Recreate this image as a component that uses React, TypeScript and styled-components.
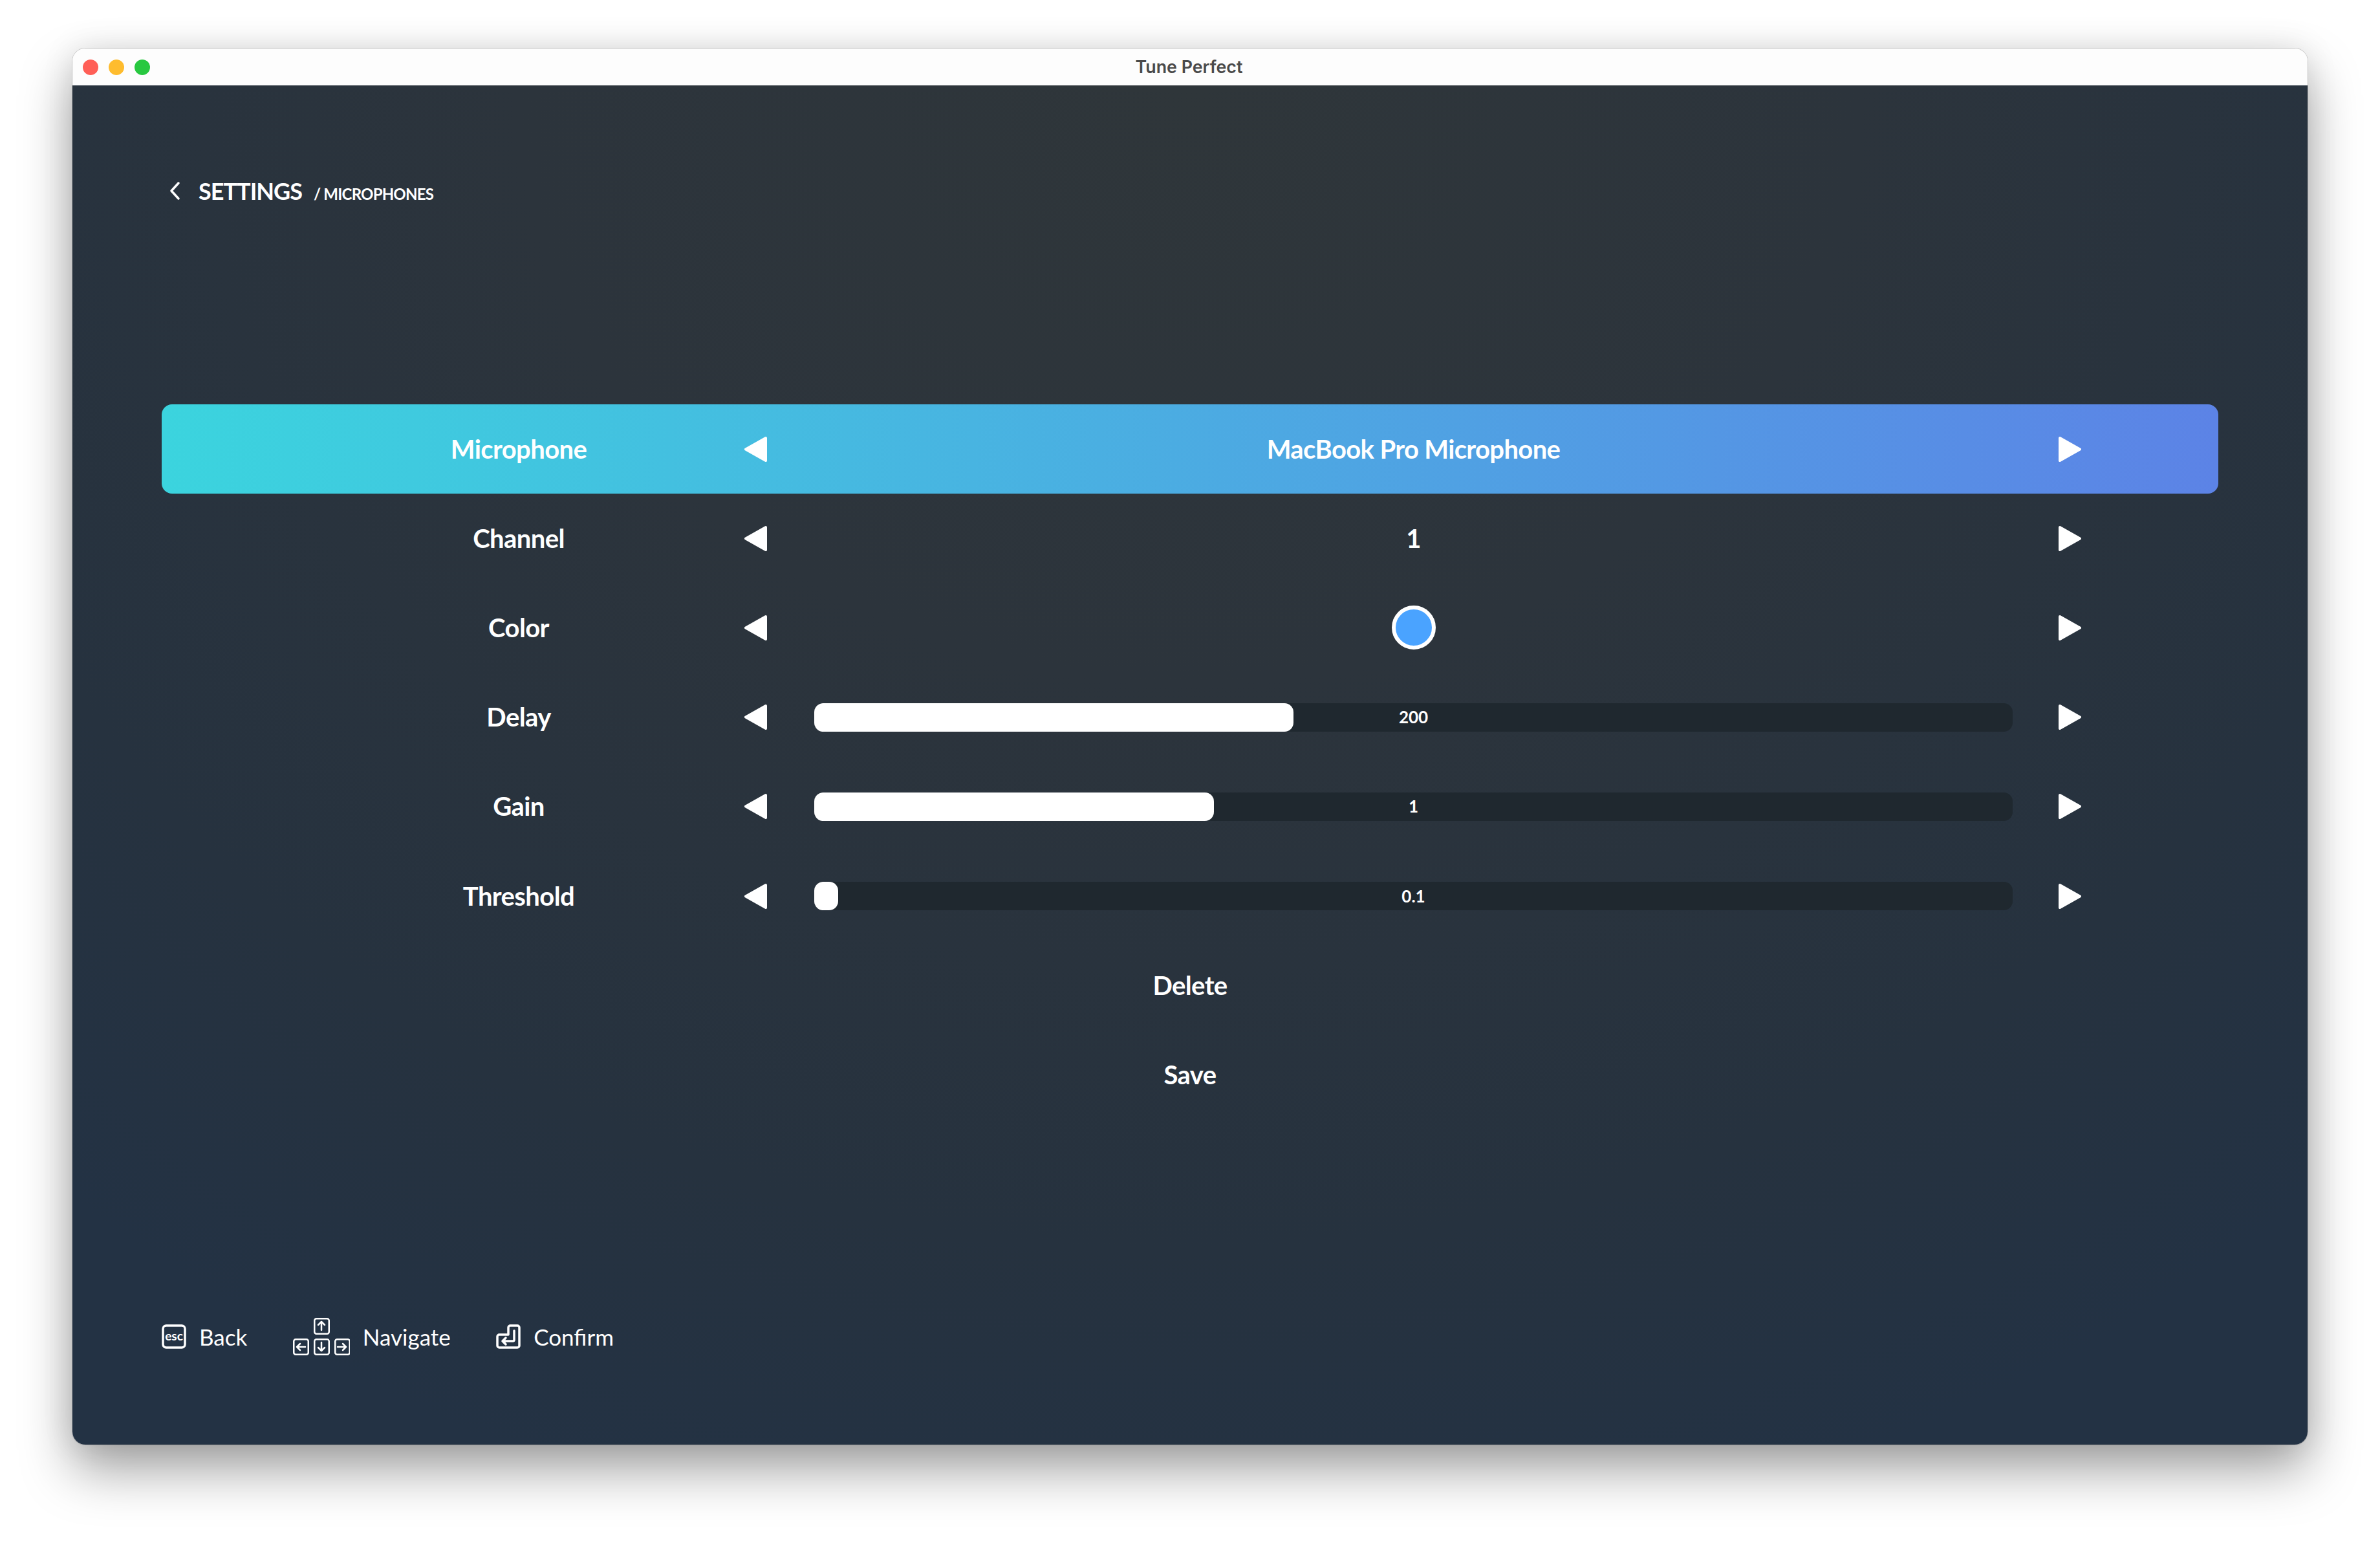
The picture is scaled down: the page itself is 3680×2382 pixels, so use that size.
import React from "react";
import styled, { createGlobalStyle } from "styled-components";

const Global = createGlobalStyle`
  html, body { margin: 0; padding: 0; background: #fff; }
  body { font-family: "Lato", "Liberation Sans", sans-serif; color: #fff; }
  #root { width: 3680px; height: 2382px; overflow: hidden; }
`;

const Stage = styled.div`
  width: 3680px;
  height: 2382px;
  padding: 75px 112px 149px;
  box-sizing: border-box;
  background: #fff;
`;

const Window = styled.div`
  height: 100%;
  display: flex;
  flex-direction: column;
  border-radius: 20px;
  overflow: hidden;
  box-shadow: 0 0 0 1px rgba(0, 0, 0, 0.16), 0 40px 80px rgba(0, 0, 0, 0.36), 0 0 50px rgba(0, 0, 0, 0.1);
`;

const TitleBar = styled.header`
  position: relative;
  flex: 0 0 57px;
  display: flex;
  align-items: center;
  justify-content: center;
  padding-right: 3px;
  background: #fdfdfd;
`;

const Lights = styled.div`
  position: absolute;
  left: 16px;
  top: 17px;
  display: flex;
  gap: 16px;
`;

const Light = styled.span<{ $color: string }>`
  width: 24px;
  height: 24px;
  border-radius: 50%;
  background: ${(p) => p.$color};
`;

const Title = styled.h1`
  margin: 0;
  font: 600 26.8px/1 "Inter", "Liberation Sans", sans-serif;
  color: #4a4a4a;
`;

const Main = styled.main`
  flex: 1;
  display: flex;
  flex-direction: column;
  padding: 0 138px 137px;
  background: radial-gradient(75% 110% at 50% 0%, #2f363a 0%, #2c343c 40%, #26323f 78%, #233244 100%);
`;

const Breadcrumb = styled.nav`
  display: flex;
  align-items: baseline;
  height: 60px;
  margin-top: 133px;
  line-height: 60px;
`;

const BackChevron = styled.svg`
  width: 20px;
  height: 30px;
  margin: 0 27px 0 10px;
  align-self: center;
  fill: none;
  stroke: #fff;
  stroke-width: 3.5;
  stroke-linecap: round;
  stroke-linejoin: round;
`;

const Crumb = styled.span`
  font-size: 36px;
  font-weight: 700;
  letter-spacing: -1px;
`;

const SubCrumb = styled.span`
  margin-left: 18px;
  font-size: 24px;
  font-weight: 700;
  letter-spacing: -0.8px;
`;

const Rows = styled.div`
  display: flex;
  flex-direction: column;
  margin-top: 300px;
`;

const Row = styled.div<{ $active?: boolean }>`
  display: grid;
  grid-template-columns: 689px 35px 73px 1853px 71px 35px;
  align-items: center;
  height: 138.2px;
  padding: 0 212px;
  border-radius: 16px;
  background: ${(p) => (p.$active ? "linear-gradient(90deg, #3bd4de 0%, #5c83e6 100%)" : "transparent")};
`;

const Label = styled.div`
  font-size: 40px;
  font-weight: 700;
  letter-spacing: -0.6px;
  text-align: center;
  padding: 0 9px 1px 0;
`;

const Arrow = styled.svg`
  display: block;
  width: 35px;
  height: 39px;
  fill: #fff;
  stroke: #fff;
  stroke-width: 4;
  stroke-linejoin: round;
`;

const Cell = styled.div`
  grid-column: 4;
  display: flex;
  justify-content: center;
  align-items: center;
`;

const ArrowCell = styled.div`
  grid-column: 6;
`;

const Value = styled.div`
  padding-bottom: 1px;
  font-size: 40px;
  font-weight: 700;
  letter-spacing: -0.65px;
`;

const Swatch = styled.div<{ $color: string }>`
  box-sizing: border-box;
  width: 68px;
  height: 68px;
  border-radius: 50%;
  border: 6px solid #fff;
  background: ${(p) => p.$color};
`;

const Track = styled.div`
  position: relative;
  width: 100%;
  height: 44px;
  border-radius: 14px;
  background: #1f282f;
`;

const Fill = styled.div`
  height: 100%;
  border-radius: 14px;
  background: #fff;
`;

const TrackValue = styled.span`
  position: absolute;
  inset: 0;
  display: flex;
  align-items: center;
  justify-content: center;
  padding-bottom: 1px;
  font-size: 26px;
  font-weight: 700;
`;

const ActionRow = styled.div`
  display: flex;
  align-items: center;
  justify-content: center;
  height: 138.2px;
  padding-bottom: 1px;
  box-sizing: border-box;
  font-size: 40px;
  font-weight: 700;
  letter-spacing: -0.6px;
`;

const Footer = styled.footer`
  display: flex;
  align-items: center;
  gap: 70.5px;
  margin-top: auto;
  height: 58px;
`;

const Hint = styled.div`
  display: flex;
  align-items: center;
  gap: 20px;
  padding-bottom: 3px;
  font-size: 35px;
  font-weight: 400;
`;

const KeyIcon = styled.svg`
  display: block;
  fill: none;
  stroke: #fff;
  stroke-linecap: round;
  stroke-linejoin: round;
`;

const EscLabel = styled.text`
  fill: #fff;
  stroke: none;
  font-family: "Lato", sans-serif;
  font-size: 19px;
  font-weight: 700;
  text-anchor: middle;
`;

const LeftArrow = () => (
  <Arrow viewBox="0 0 35 39" aria-hidden>
    <path d="M33 2 L2 19.5 L33 37 Z" />
  </Arrow>
);

const RightArrow = () => (
  <Arrow viewBox="0 0 35 39" aria-hidden>
    <path d="M2 2 L33 19.5 L2 37 Z" />
  </Arrow>
);

const Control = ({ label, active, children }: { label: string; active?: boolean; children: React.ReactNode }) => (
  <Row $active={active}>
    <Label>{label}</Label>
    <LeftArrow />
    <Cell>{children}</Cell>
    <ArrowCell>
      <RightArrow />
    </ArrowCell>
  </Row>
);

const Slider = ({ percent, value }: { percent: number; value: string }) => (
  <Track>
    <Fill style={{ width: `${percent}%` }} />
    <TrackValue>{value}</TrackValue>
  </Track>
);

const keys: { x: number; y: number; arrow: string }[] = [
  { x: 32, y: 0, arrow: "M44 19V6M39 11l5-5 5 5" },
  { x: 0, y: 32, arrow: "M19 45H6M11 40l-5 5 5 5" },
  { x: 32, y: 32, arrow: "M44 38v13M39 46l5 5 5-5" },
  { x: 64, y: 32, arrow: "M69 45h13M77 40l5 5-5 5" },
];

export default function App() {
  return (
    <>
      <Global />
      <Stage>
        <Window>
          <TitleBar>
            <Lights>
              <Light $color="#ff5f57" />
              <Light $color="#febc2e" />
              <Light $color="#28c840" />
            </Lights>
            <Title>Tune Perfect</Title>
          </TitleBar>
          <Main>
            <Breadcrumb>
              <BackChevron viewBox="0 0 20 30" aria-hidden>
                <path d="M16 3 L5 15 L16 27" />
              </BackChevron>
              <Crumb>SETTINGS</Crumb>
              <SubCrumb>/ MICROPHONES</SubCrumb>
            </Breadcrumb>
            <Rows>
              <Control label="Microphone" active>
                <Value>MacBook Pro Microphone</Value>
              </Control>
              <Control label="Channel">
                <Value>1</Value>
              </Control>
              <Control label="Color">
                <Swatch $color="#4aa3ff" />
              </Control>
              <Control label="Delay">
                <Slider percent={40} value="200" />
              </Control>
              <Control label="Gain">
                <Slider percent={33.33} value="1" />
              </Control>
              <Control label="Threshold">
                <Slider percent={2} value="0.1" />
              </Control>
              <ActionRow>Delete</ActionRow>
              <ActionRow>Save</ActionRow>
            </Rows>
            <Footer>
              <Hint>
                <KeyIcon width="38" height="38" viewBox="0 0 38 38" strokeWidth="3.5" aria-hidden>
                  <rect x="2" y="2" width="34" height="34" rx="5" />
                  <EscLabel x="19" y="25">esc</EscLabel>
                </KeyIcon>
                Back
              </Hint>
              <Hint>
                <KeyIcon width="88" height="58" viewBox="0 0 88 58" strokeWidth="2.5" aria-hidden>
                  {keys.map((k) => (
                    <g key={k.arrow}>
                      <rect x={k.x + 1.25} y={k.y + 1.25} width="22.5" height="23.5" rx="3" />
                      <path d={k.arrow} />
                    </g>
                  ))}
                </KeyIcon>
                Navigate
              </Hint>
              <Hint>
                <KeyIcon width="38" height="38" viewBox="0 0 38 38" strokeWidth="3.5" aria-hidden>
                  <path d="M22 2h11a3 3 0 0 1 3 3v28a3 3 0 0 1-3 3H5a3 3 0 0 1-3-3V19a3 3 0 0 1 3-3h14V5a3 3 0 0 1 3-3Z" />
                  <path d="M28 10v14a2 2 0 0 1-2 2H10M15 21l-5 5 5 5" />
                </KeyIcon>
                Confirm
              </Hint>
            </Footer>
          </Main>
        </Window>
      </Stage>
    </>
  );
}
